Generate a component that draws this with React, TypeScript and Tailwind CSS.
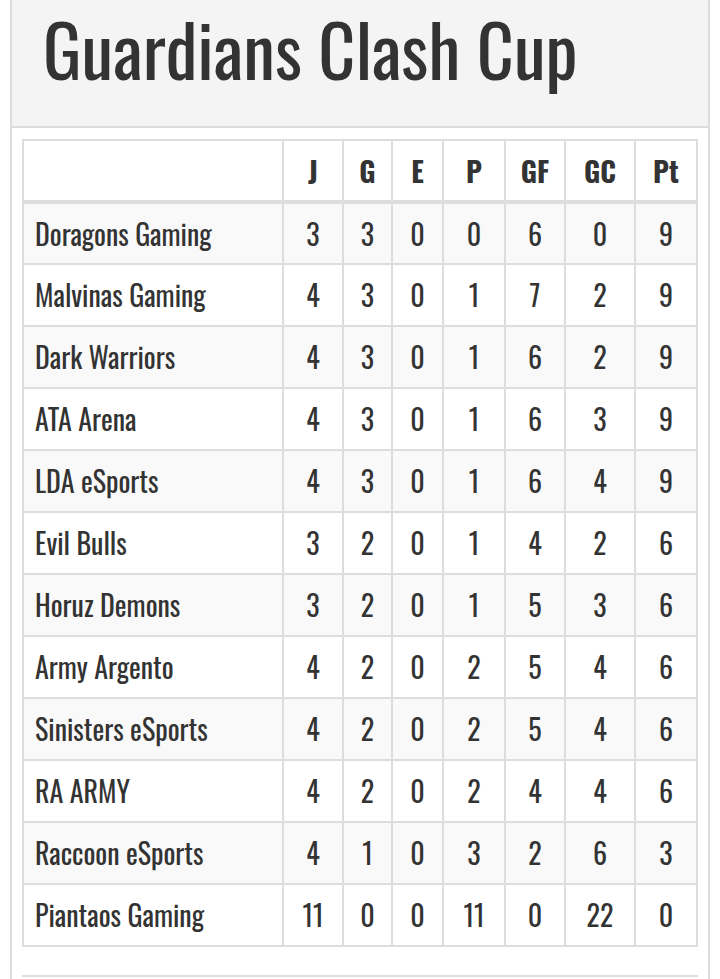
import React from "react";

type Team = {
  name: string;
  stats: number[];
};

const teams: Team[] = [
  { name: "Doragons Gaming", stats: [3, 3, 0, 0, 6, 0, 9] },
  { name: "Malvinas Gaming", stats: [4, 3, 0, 1, 7, 2, 9] },
  { name: "Dark Warriors", stats: [4, 3, 0, 1, 6, 2, 9] },
  { name: "ATA Arena", stats: [4, 3, 0, 1, 6, 3, 9] },
  { name: "LDA eSports", stats: [4, 3, 0, 1, 6, 4, 9] },
  { name: "Evil Bulls", stats: [3, 2, 0, 1, 4, 2, 6] },
  { name: "Horuz Demons", stats: [3, 2, 0, 1, 5, 3, 6] },
  { name: "Army Argento", stats: [4, 2, 0, 2, 5, 4, 6] },
  { name: "Sinisters eSports", stats: [4, 2, 0, 2, 5, 4, 6] },
  { name: "RA ARMY", stats: [4, 2, 0, 2, 4, 4, 6] },
  { name: "Raccoon eSports", stats: [4, 1, 0, 3, 2, 6, 3] },
  { name: "Piantaos Gaming", stats: [11, 0, 0, 11, 0, 22, 0] },
];

const columns = [
  { label: "J", width: "w-[60px]" },
  { label: "G", width: "w-[49px]" },
  { label: "E", width: "w-[51px]" },
  { label: "P", width: "w-[62px]" },
  { label: "GF", width: "w-[60px]" },
  { label: "GC", width: "w-[70px]" },
  { label: "Pt", width: "w-[62px]" },
];

export default function App() {
  return (
    <div className="h-[979px] overflow-hidden bg-white font-['Oswald','Liberation_Sans_Narrow','Roboto_Condensed','DejaVu_Sans_Condensed',sans-serif] text-[#333]">
      <div className="mx-[10px] h-full border-x-2 border-[#ddd]">
        {/* TITLE */}
        <div className="flex h-[128px] items-start border-b-2 border-[#ddd] bg-[#f4f4f4] pl-[31px]">
          <h1 className="text-[72px] leading-[96px]">Guardians Clash Cup</h1>
        </div>

        {/* STANDINGS */}
        <div className="px-[10px] pt-[11px]">
          <table className="w-full table-fixed border-collapse border-2 border-[#ddd]">
            <thead>
              <tr className="h-[62px]">
                <th className="border-2 border-b-4 border-[#ddd]" />
                {columns.map((col) => (
                  <th
                    key={col.label}
                    className={`${col.width} border-2 border-b-4 border-[#ddd] text-center text-[28px] font-bold leading-[40px]`}
                  >
                    {col.label}
                  </th>
                ))}
              </tr>
            </thead>
            <tbody>
              {teams.map((team, i) => (
                <tr
                  key={team.name}
                  className={`h-[62px] ${i % 2 === 0 ? "bg-[#f9f9f9]" : "bg-white"}`}
                >
                  <td className="border-2 border-[#ddd] pl-[11px] text-[28px] leading-[40px]">
                    {team.name}
                  </td>
                  {team.stats.map((value, j) => (
                    <td
                      key={j}
                      className="border-2 border-[#ddd] text-center text-[28px] leading-[40px]"
                    >
                      {value}
                    </td>
                  ))}
                </tr>
              ))}
            </tbody>
          </table>
          <div className="mt-[28px] border-t-2 border-[#ddd]" />
        </div>
      </div>
    </div>
  );
}
